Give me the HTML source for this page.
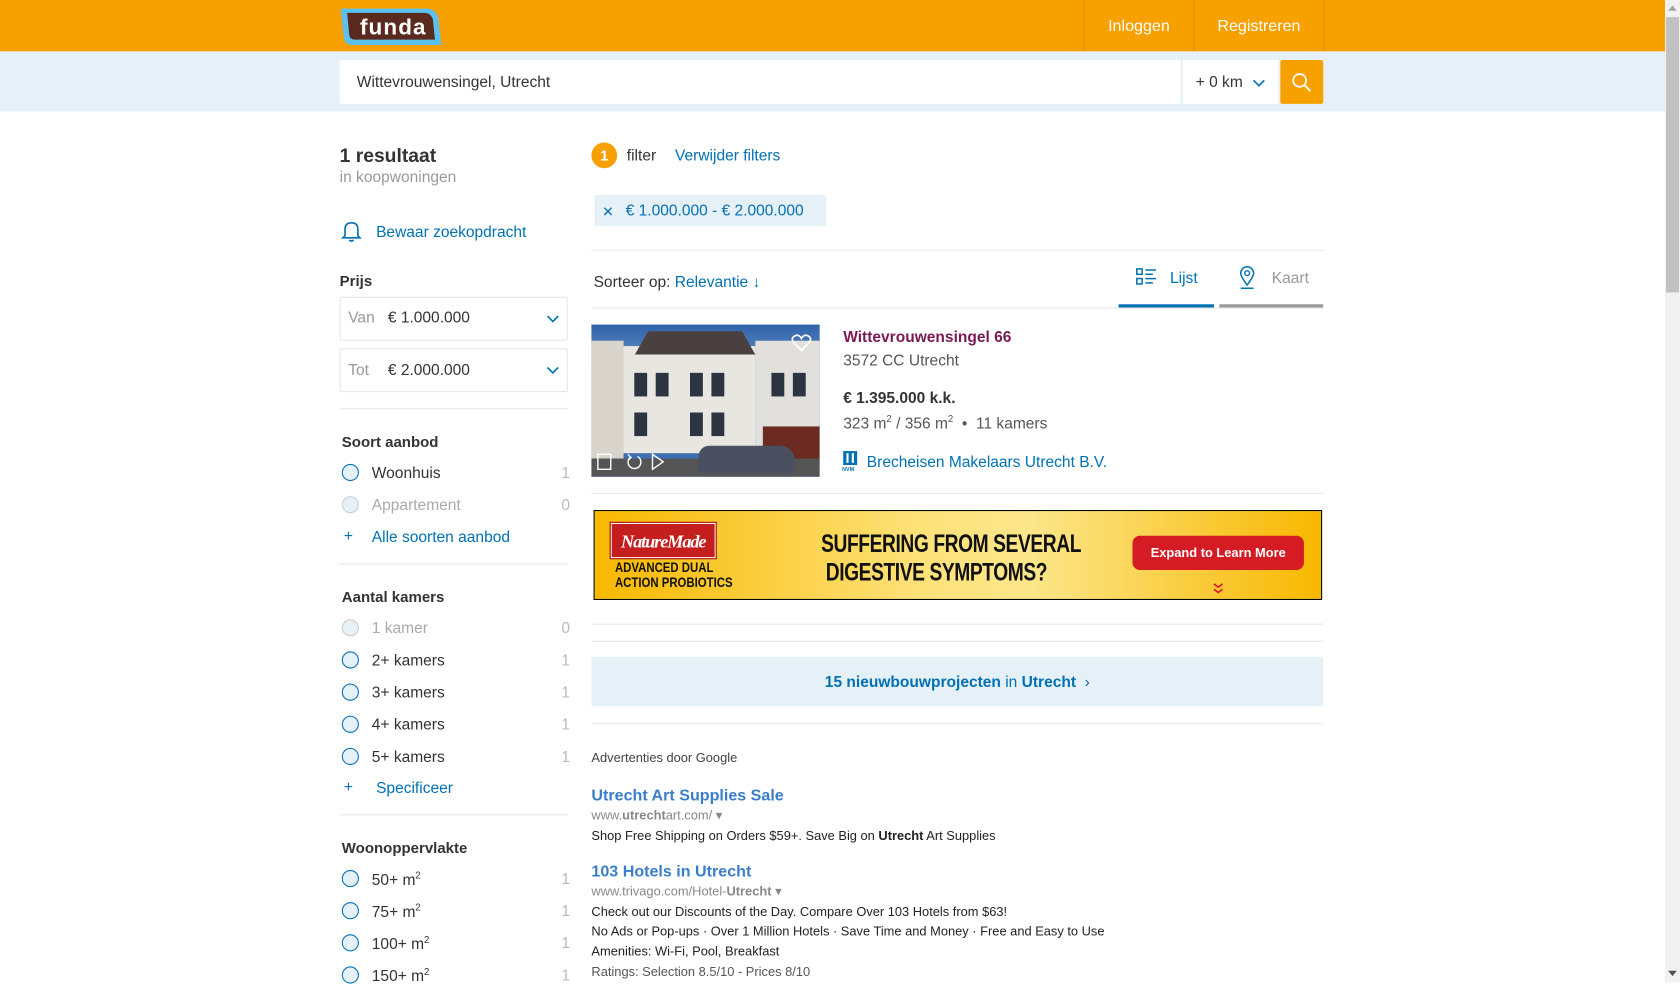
<!DOCTYPE html>
<html><head><meta charset="utf-8">
<style>
html,body{margin:0;padding:0;overflow:hidden;background:#fff;width:1680px;height:982px}
#w{position:absolute;left:0;top:0;width:1568px;height:917px;transform:scale(1.07143);transform-origin:0 0;font-family:"Liberation Sans",sans-serif;color:#333;font-size:14.5px}
.a{position:absolute;white-space:nowrap}
.t{margin-top:1px}
.blue{color:#0071b3}
.gray{color:#999}
.hr{position:absolute;height:1px;background:#e6e6e6}
.h{font-weight:bold;font-size:14px;color:#333}
.rad{position:absolute;width:14px;height:14px;border:1.5px solid #0071b3;border-radius:50%;background:#e6f0f7}
.rad.d{border-color:#ccc}
.cnt{position:absolute;left:500px;width:32px;text-align:right;color:#bbb}
.sel{position:absolute;left:317px;width:211px;height:39px;border:1px solid #e6e6e6;border-radius:2px}
.g{font-family:"Liberation Sans",Arial,sans-serif}
</style></head><body><div id="w">
<!-- header -->
<div class="a" style="left:0;top:0;width:1554px;height:48px;background:#f7a100"></div>
<svg class="a" style="left:316px;top:6px" width="98" height="38" viewBox="0 0 98 38"><path d="M2 2 L82 2 Q90 2 93 10 L96 36 L12 36 Q7 36 5 30 Z" fill="#5bc2f0"/><path d="M8 6 L80 6 Q86 6 88 12 L90 31 L15 31 Q11 31 10 27 Z" fill="#5b2a1e"/><text x="20" y="26" fill="#fff" font-family="Liberation Sans,sans-serif" font-size="21" font-weight="bold" letter-spacing="1">funda</text></svg>
<div class="a" style="left:1011px;top:0;width:1px;height:48px;background:#e08f00"></div>
<div class="a" style="left:1114px;top:0;width:1px;height:48px;background:#e08f00"></div>
<div class="a" style="left:1235px;top:0;width:1px;height:48px;background:#e08f00"></div>
<div class="a" style="left:1012px;top:16px;width:102px;text-align:center;color:#fff;font-size:15px">Inloggen</div>
<div class="a" style="left:1115px;top:16px;width:120px;text-align:center;color:#fff;font-size:15px">Registreren</div>
<!-- search -->
<div class="a" style="left:0;top:48px;width:1554px;height:56px;background:#e6f0f7"></div>
<div class="a" style="left:317px;top:56px;width:785px;height:41px;background:#fff;border-radius:2px"></div>
<div class="a" style="left:333px;top:69px;font-size:14.5px;color:#333">Wittevrouwensingel, Utrecht</div>
<div class="a" style="left:1104px;top:56px;width:89px;height:41px;background:#fff"></div>
<div class="a" style="left:1116px;top:69px;font-size:14.5px">+ 0 km</div>
<svg class="a" style="left:1169px;top:74px" width="12" height="8"><path d="M1 1 L6 6 L11 1" stroke="#0071b3" stroke-width="1.5" fill="none"/></svg>
<div class="a" style="left:1195px;top:56px;width:40px;height:41px;background:#f7a100;border-radius:2px"></div>
<svg class="a" style="left:1205px;top:67px" width="20" height="20"><circle cx="8" cy="8" r="6" stroke="#fff" stroke-width="1.6" fill="none"/><path d="M12.5 12.5 L18 18" stroke="#fff" stroke-width="1.8"/></svg>
<!-- scrollbar -->
<div class="a" style="left:1554px;top:0;width:14px;height:917px;background:#f1f1f1"></div>
<div class="a" style="left:1555px;top:16px;width:12px;height:257px;background:#c1c1c1"></div>
<svg class="a" style="left:1555px;top:3px" width="12" height="8"><path d="M2 7 L6 2 L10 7Z" fill="#a3a3a3"/></svg>
<svg class="a" style="left:1555px;top:904px" width="12" height="8"><path d="M2 2 L6 7 L10 2Z" fill="#505050"/></svg>

<!-- left column -->
<div class="a" style="left:317px;top:135px;font-size:18px;font-weight:bold;color:#333">1 resultaat</div>
<div class="a gray" style="left:317px;top:158px;font-size:14.5px">in koopwoningen</div>
<svg class="a" style="left:318px;top:205px" width="20" height="22"><path d="M4 15 L4 9 Q4 3 10 3 Q16 3 16 9 L16 15 L18 17 L2 17 Z" stroke="#0071b3" stroke-width="1.5" fill="none"/><path d="M8 19 Q10 21 12 19" stroke="#0071b3" stroke-width="1.5" fill="none"/></svg>
<div class="a blue" style="left:351px;top:209px">Bewaar zoekopdracht</div>
<div class="a h" style="left:317px;top:254px">Prijs</div>
<div class="sel" style="top:277px"></div>
<div class="a gray" style="left:325px;top:289px">Van</div>
<div class="a" style="left:362px;top:289px">€ 1.000.000</div>
<svg class="a" style="left:510px;top:294px" width="12" height="8"><path d="M1 1 L6 6 L11 1" stroke="#0071b3" stroke-width="1.5" fill="none"/></svg>
<div class="sel" style="top:325px"></div>
<div class="a gray" style="left:325px;top:338px">Tot</div>
<div class="a" style="left:362px;top:338px">€ 2.000.000</div>
<svg class="a" style="left:510px;top:342px" width="12" height="8"><path d="M1 1 L6 6 L11 1" stroke="#0071b3" stroke-width="1.5" fill="none"/></svg>
<div class="hr" style="left:317px;top:381px;width:213px"></div>

<div class="a h" style="left:319px;top:404px">Soort aanbod</div>
<div class="rad" style="left:319px;top:433px"></div><div class="a" style="left:347px;top:434px">Woonhuis</div><div class="cnt a" style="top:434px">1</div>
<div class="rad d" style="left:319px;top:463px"></div><div class="a" style="left:347px;top:464px;color:#aaa">Appartement</div><div class="cnt a" style="top:464px">0</div>
<div class="a blue" style="left:321px;top:493px">+</div><div class="a blue" style="left:347px;top:494px">Alle soorten aanbod</div>
<div class="hr" style="left:317px;top:526px;width:213px"></div>

<div class="a h" style="left:319px;top:549px">Aantal kamers</div>
<div class="rad d" style="left:319px;top:578px"></div><div class="a" style="left:347px;top:579px;color:#aaa">1 kamer</div><div class="cnt a" style="top:579px">0</div>
<div class="rad" style="left:319px;top:608px"></div><div class="a" style="left:347px;top:609px">2+ kamers</div><div class="cnt a" style="top:609px">1</div>
<div class="rad" style="left:319px;top:638px"></div><div class="a" style="left:347px;top:639px">3+ kamers</div><div class="cnt a" style="top:639px">1</div>
<div class="rad" style="left:319px;top:668px"></div><div class="a" style="left:347px;top:669px">4+ kamers</div><div class="cnt a" style="top:669px">1</div>
<div class="rad" style="left:319px;top:698px"></div><div class="a" style="left:347px;top:699px">5+ kamers</div><div class="cnt a" style="top:699px">1</div>
<div class="a blue" style="left:321px;top:727px">+</div><div class="a blue" style="left:351px;top:728px">Specificeer</div>
<div class="hr" style="left:317px;top:760px;width:213px"></div>

<div class="a h" style="left:319px;top:783px">Woonoppervlakte</div>
<div class="rad" style="left:319px;top:812px"></div><div class="a" style="left:347px;top:812px">50+ m<sup style="font-size:9px">2</sup></div><div class="cnt a" style="top:813px">1</div>
<div class="rad" style="left:319px;top:842px"></div><div class="a" style="left:347px;top:842px">75+ m<sup style="font-size:9px">2</sup></div><div class="cnt a" style="top:843px">1</div>
<div class="rad" style="left:319px;top:872px"></div><div class="a" style="left:347px;top:872px">100+ m<sup style="font-size:9px">2</sup></div><div class="cnt a" style="top:873px">1</div>
<div class="rad" style="left:319px;top:902px"></div><div class="a" style="left:347px;top:902px">150+ m<sup style="font-size:9px">2</sup></div><div class="cnt a" style="top:903px">1</div>

<!-- right column -->
<div class="a" style="left:552px;top:133px;width:24px;height:24px;border-radius:50%;background:#f7a100;color:#fff;font-weight:bold;text-align:center;line-height:24px;font-size:14px">1</div>
<div class="a" style="left:585px;top:138px">filter</div>
<div class="a blue" style="left:630px;top:138px">Verwijder filters</div>
<div class="a" style="left:555px;top:182px;width:216px;height:29px;background:#e6f0f7;border-radius:2px"></div>
<div class="a blue" style="left:562px;top:190px;font-size:13px">✕</div>
<div class="a blue" style="left:584px;top:189px">€ 1.000.000 - € 2.000.000</div>
<div class="hr" style="left:552px;top:233px;width:683px"></div>
<div class="a" style="left:554px;top:256px">Sorteer op: <span class="blue">Relevantie ↓</span></div>
<svg class="a" style="left:1060px;top:250px" width="20" height="17"><rect x="1" y="1" width="5" height="5" stroke="#0071b3" fill="none" stroke-width="1.4"/><rect x="1" y="10" width="5" height="5" stroke="#0071b3" fill="none" stroke-width="1.4"/><path d="M9 2h10M9 6h7M9 10h10M9 14h7" stroke="#0071b3" stroke-width="1.4"/></svg>
<div class="a blue" style="left:1092px;top:252px">Lijst</div>
<svg class="a" style="left:1156px;top:248px" width="18" height="22"><path d="M8 18 Q2 10 2 7 A6 6 0 0 1 14 7 Q14 10 8 18Z" stroke="#0071b3" stroke-width="1.4" fill="none"/><circle cx="8" cy="7" r="2.2" stroke="#0071b3" stroke-width="1.3" fill="none"/><path d="M2 21h12" stroke="#0071b3" stroke-width="1.4"/></svg>
<div class="a" style="left:1187px;top:252px;color:#999">Kaart</div>
<div class="hr" style="left:552px;top:287px;width:683px"></div>
<div class="a" style="left:1044px;top:284px;width:89px;height:3px;background:#0071b3"></div>
<div class="a" style="left:1138px;top:284px;width:97px;height:3px;background:#999"></div>

<!-- photo -->
<div class="a" style="left:552px;top:303px;width:213px;height:142px;overflow:hidden;background:#3d6fb0">
  <div class="a" style="left:0;top:0;width:213px;height:40px;background:linear-gradient(#2f62a8,#6a95cc)"></div>
  <div class="a" style="left:28px;top:20px;width:125px;height:100px;background:#e8e6e0"></div>
  <div class="a" style="left:28px;top:6px;width:125px;height:22px;background:#4a4040;clip-path:polygon(10% 100%,20% 0,90% 0,100% 100%)"></div>
  <div class="a" style="left:0;top:15px;width:30px;height:110px;background:#d8d4cc"></div>
  <div class="a" style="left:153px;top:15px;width:60px;height:110px;background:#e2e0dc"></div>
  <div class="a" style="left:160px;top:95px;width:53px;height:40px;background:#6b2a22"></div>
  <div class="a" style="left:40px;top:45px;width:12px;height:22px;background:#2b3440"></div>
  <div class="a" style="left:60px;top:45px;width:12px;height:22px;background:#2b3440"></div>
  <div class="a" style="left:92px;top:45px;width:12px;height:22px;background:#2b3440"></div>
  <div class="a" style="left:112px;top:45px;width:12px;height:22px;background:#2b3440"></div>
  <div class="a" style="left:40px;top:82px;width:12px;height:22px;background:#2b3440"></div>
  <div class="a" style="left:92px;top:82px;width:12px;height:22px;background:#2b3440"></div>
  <div class="a" style="left:112px;top:82px;width:12px;height:22px;background:#2b3440"></div>
  <div class="a" style="left:168px;top:45px;width:12px;height:22px;background:#2b3440"></div>
  <div class="a" style="left:188px;top:45px;width:12px;height:22px;background:#2b3440"></div>
  <div class="a" style="left:0;top:125px;width:213px;height:17px;background:#555"></div>
  <div class="a" style="left:100px;top:113px;width:90px;height:26px;background:#4a5060;border-radius:10px 14px 4px 4px"></div>
</div>
<svg class="a" style="left:738px;top:311px" width="20" height="18"><path d="M10 16 L3 9 Q0 5 3 3 Q7 0 10 5 Q13 0 17 3 Q20 5 17 9 Z" stroke="#fff" stroke-width="1.6" fill="none"/></svg>
<svg class="a" style="left:557px;top:423px" width="64" height="16"><path d="M1 1h12v14H1z" stroke="#fff" stroke-width="1.3" fill="none"/><path d="M38 3 A6 6 0 1 1 31 4" stroke="#fff" stroke-width="1.3" fill="none"/><path d="M29 1 L32 4 L29 7" stroke="#fff" stroke-width="1.2" fill="none"/><path d="M52 1 L62 8 L52 15Z" stroke="#fff" stroke-width="1.3" fill="none"/></svg>

<div class="a" style="left:787px;top:307px;color:#7a1a55;font-weight:bold;font-size:14.5px">Wittevrouwensingel 66</div>
<div class="a" style="left:787px;top:329px;color:#555">3572 CC Utrecht</div>
<div class="a" style="left:787px;top:364px;font-weight:bold;color:#333">€ 1.395.000 k.k.</div>
<div class="a" style="left:787px;top:386px;color:#555">323 m<sup style="font-size:9px">2</sup> / 356 m<sup style="font-size:9px">2</sup> &nbsp;•&nbsp; 11 kamers</div>
<svg class="a" style="left:786px;top:420px" width="16" height="20"><rect x="1" y="1" width="13" height="13" fill="#0071b3"/><rect x="4" y="3" width="2" height="9" fill="#fff"/><rect x="9" y="3" width="2" height="9" fill="#fff"/><text x="0" y="19.5" font-size="5" fill="#0071b3" font-family="Liberation Sans" font-weight="bold">NVM</text></svg>
<div class="a blue" style="left:809px;top:424px">Brecheisen Makelaars Utrecht B.V.</div>
<div class="hr" style="left:552px;top:460px;width:683px"></div>

<!-- banner ad -->
<div class="a" style="left:554px;top:476px;width:678px;height:82px;border:1px solid #000;background:linear-gradient(90deg,#f8b800 0%,#fde27a 45%,#fce68a 60%,#f8b800 100%)"></div>
<div class="a" style="left:570px;top:488px;width:96px;height:31px;background:#c41e1e;border:1px solid #fff;outline:1px solid #a01010;color:#fff;font-family:'Liberation Serif',serif;font-style:italic;font-weight:bold;font-size:17px;text-align:center;line-height:33px;letter-spacing:-1px">NatureMade</div>
<div class="a" style="left:566px;top:523px;width:106px;text-align:center;font-weight:bold;font-size:12.5px;line-height:14px;color:#111;transform:scaleX(.85)">ADVANCED DUAL<br>ACTION PROBIOTICS</div>
<div class="a" style="left:736px;top:494px;width:276px;text-align:center;font-weight:bold;font-size:23px;line-height:27px;color:#111;transform:scaleX(.78);letter-spacing:-.5px">SUFFERING FROM SEVERAL<br>DIGESTIVE SYMPTOMS?</div>
<div class="a" style="left:1057px;top:500px;width:160px;height:32px;background:#d51b23;border-radius:7px;color:#fff;font-weight:bold;font-size:12px;text-align:center;line-height:32px">Expand to Learn More</div>
<svg class="a" style="left:1131px;top:544px" width="12" height="11"><path d="M2 1 L6 4 L10 1 M2 6 L6 9 L10 6" stroke="#d51b23" stroke-width="1.5" fill="none"/></svg>

<div class="hr" style="left:552px;top:582px;width:683px"></div>
<div class="hr" style="left:552px;top:598px;width:683px"></div>
<div class="a" style="left:552px;top:613px;width:683px;height:46px;background:#e6f0f7"></div>
<div class="a" style="left:552px;top:629px;width:683px;text-align:center;color:#0071b3"><b>15 nieuwbouwprojecten</b> in <b>Utrecht</b> &nbsp;›</div>
<div class="hr" style="left:552px;top:675px;width:683px"></div>

<!-- google ads -->
<div class="a g" style="left:552px;top:700px;font-size:12px;color:#444">Advertenties door Google</div>
<div class="a g" style="left:552px;top:734px;font-size:15px;font-weight:bold;color:#3a7ecb">Utrecht Art Supplies Sale</div>
<div class="a g" style="left:552px;top:754px;font-size:12px;color:#888">www.<b>utrecht</b>art.com/ ▾</div>
<div class="a g" style="left:552px;top:773px;font-size:12px;color:#222">Shop Free Shipping on Orders $59+. Save Big on <b>Utrecht</b> Art Supplies</div>
<div class="a g" style="left:552px;top:805px;font-size:15px;font-weight:bold;color:#3a7ecb">103 Hotels in Utrecht</div>
<div class="a g" style="left:552px;top:825px;font-size:12px;color:#888">www.trivago.com/Hotel-<b>Utrecht</b> ▾</div>
<div class="a g" style="left:552px;top:844px;font-size:12px;color:#222">Check out our Discounts of the Day. Compare Over 103 Hotels from $63!</div>
<div class="a g" style="left:552px;top:862px;font-size:12px;color:#222">No Ads or Pop-ups · Over 1 Million Hotels · Save Time and Money · Free and Easy to Use</div>
<div class="a g" style="left:552px;top:881px;font-size:12px;color:#222">Amenities: Wi-Fi, Pool, Breakfast</div>
<div class="a g" style="left:552px;top:900px;font-size:12px;color:#555">Ratings: Selection 8.5/10 - Prices 8/10</div>
</div></body></html>
